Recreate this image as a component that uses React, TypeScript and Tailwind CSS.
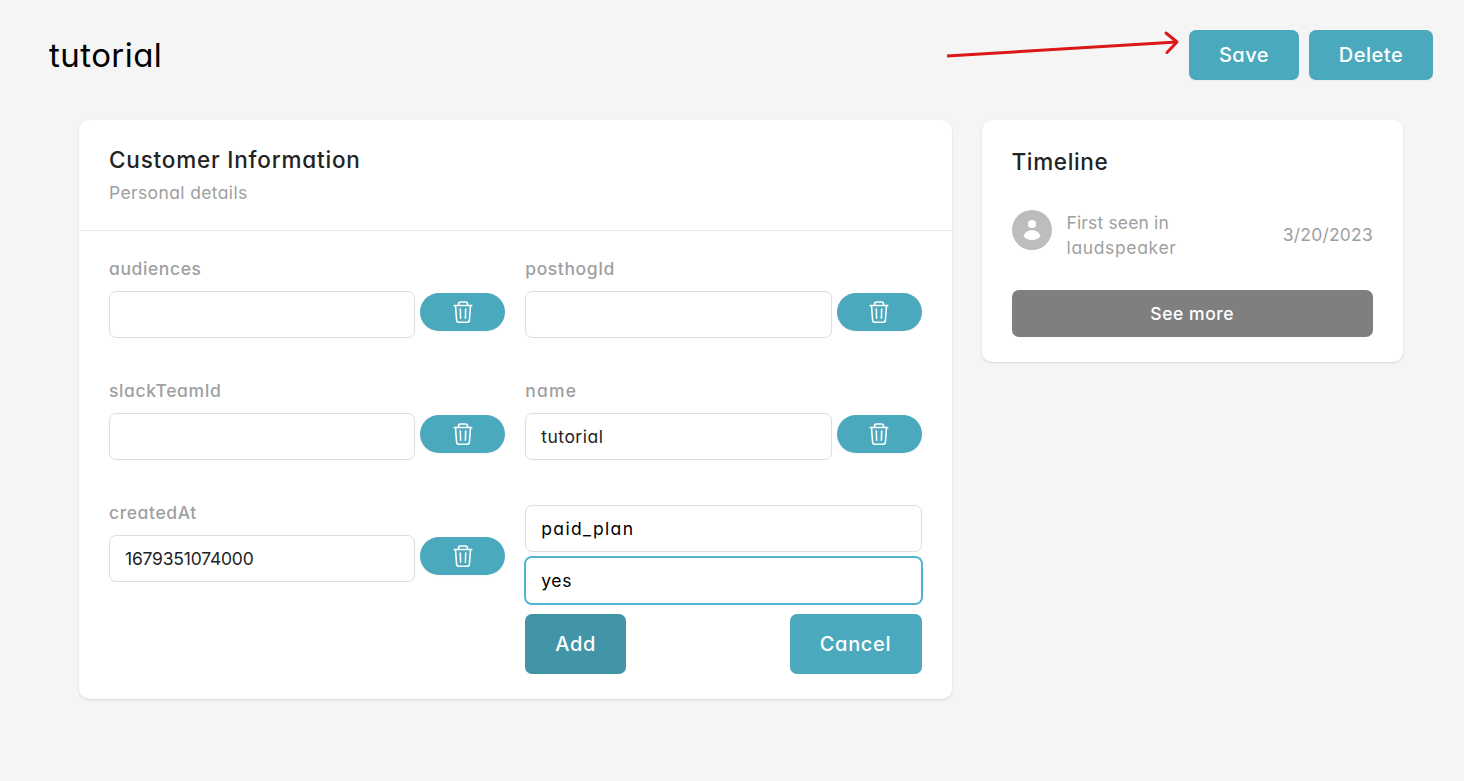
import React from "react";

function TrashIcon() {
  return (
    <svg width="20" height="24" viewBox="0 0 20 24" fill="none" stroke="white" strokeWidth="1.6" strokeLinecap="round" strokeLinejoin="round">
      <path d="M1.2 5.5H18.800" />
      <path d="M5.5 5.2V4C5.5 2.6 6.3 2 7.6 2H12.4C13.700 2 14.5 2.600 14.5 4V5.2" />
      <path d="M2.500 5.700L3.600 20.300C3.700 21.600 4.500 22.200 5.600 22.200H14.400C15.500 22.200 16.300 21.600 16.400 20.300L17.500 5.700" />
      <path d="M7.300 9L7.600 18.200M12.700 9L12.400 18.200" />
    </svg>
  );
}

const inputBase = "flex h-[47px] items-center rounded-[7px] border bg-white px-[15px] pt-px text-[17.5px]";

interface FieldProps {
  label: string;
  value?: string;
  labelTracking?: string;
  valueTracking?: string;
}

function Field({ label, value, labelTracking = "tracking-[0.6px]", valueTracking = "tracking-[0.5px]" }: FieldProps) {
  return (
    <div className="h-[92px]">
      <div className={`h-[35px] pt-px text-[17.5px] leading-[23px] font-medium text-[#9f9f9f] ${labelTracking}`}>
        {label}
      </div>
      <div className="flex gap-[5px]">
        <div className={`${inputBase} ${valueTracking} min-w-0 flex-1 border-[#dedede] text-[#222325]`}>{value}</div>
        <button className="mt-[2px] flex h-[38px] w-[85px] items-center justify-center rounded-full bg-[#4ba9be] shadow-xs" aria-label="Remove attribute">
          <TrashIcon />
        </button>
      </div>
    </div>
  );
}

export default function App() {
  return (
    <main className="h-[781px] w-[1464px] overflow-hidden bg-[#f5f5f5] font-['Inter',sans-serif] [font-feature-settings:'cv11']">
      <header className="flex h-[120px] items-start pt-[30px] pr-[31px] pl-[49px]">
        <h1 className="text-[33px] leading-[50px] tracking-[0.45px] text-black">tutorial</h1>
        <svg className="mr-[9px] ml-auto" width="236" height="50" viewBox="0 0 236 50" fill="none" stroke="#dc1717" strokeWidth="3" strokeLinecap="round" strokeLinejoin="round">
          <path d="M3 26L233 12" strokeLinecap="butt" />
          <path d="M222 3L233 12L223 22.500" />
        </svg>
        <div className="flex gap-[10px] text-[20px] font-medium tracking-[0.5px] text-white">
          <button className="h-[50px] w-[110px] rounded-[7px] bg-[#4ba9be] shadow-xs">Save</button>
          <button className="h-[50px] w-[124px] rounded-[7px] bg-[#4ba9be] shadow-xs">Delete</button>
        </div>
      </header>
      <div className="flex items-start gap-[30px] pl-[79px]">
        <section className="h-[579px] w-[872.5px] rounded-[10px] bg-white shadow">
          <div className="h-[111px] border-b border-[#ebebeb] px-[30px] pt-[25px]">
            <h2 className="text-[22.5px] leading-[30px] font-medium tracking-[0.8px] text-[#222325]">Customer Information</h2>
            <p className="mt-[6px] text-[17.5px] leading-6 tracking-[0.37px] text-[#9f9f9f]">Personal details</p>
          </div>
          <div className="grid grid-cols-2 gap-x-5 gap-y-[30px] px-[30px] pt-[25px]">
            <Field label="audiences" />
            <Field label="posthogId" />
            <Field label="slackTeamId" />
            <Field label="name" value="tutorial" labelTracking="tracking-[1.2px]" />
            <Field label="createdAt" value="1679351074000" valueTracking="tracking-[-0.2px]" />
            <div className="pt-[5px]">
              <div className={`${inputBase} border-[#dedede] tracking-[1.35px] text-black`}>paid_plan</div>
              <div className={`${inputBase} mt-[5px] border-[#4fb4cd] tracking-[0.6px] text-black ring-1 ring-[#4fb4cd]`}>yes</div>
              <div className="mt-[10px] flex justify-between text-[20px] font-medium tracking-[0.7px] text-white">
                <button className="h-[60px] w-[101px] rounded-[7px] bg-[#4295a6]">Add</button>
                <button className="h-[60px] w-[132px] rounded-[7px] bg-[#4ba9be]">Cancel</button>
              </div>
            </div>
          </div>
        </section>
        <section className="h-[242px] w-[421.5px] rounded-[10px] bg-white px-[30px] pt-[27px] shadow">
          <h2 className="text-[22.5px] leading-[30px] font-medium tracking-[0.65px] text-[#222325]">Timeline</h2>
          <div className="mt-[33px] flex h-[50px]">
            <div className="flex size-10 shrink-0 items-center justify-center rounded-full bg-[#bdbdbd]">
              <svg width="20" height="22" viewBox="0 0 20 22" fill="white">
                <circle cx="10" cy="5" r="4" />
                <path d="M1.500 17.500C2.500 13.500 5.800 11.300 10 11.300S17.500 13.500 18.500 17.500C16.500 20 13.500 21 10 21S3.500 20 1.500 17.500Z" />
              </svg>
            </div>
            <p className="ml-[15px] w-[130px] text-[17.5px] leading-[25px] text-[#9f9f9f]">
              <span className="tracking-[0.15px]">First seen in </span>
              <span className="tracking-[0.65px]">laudspeaker</span>
            </p>
            <time className="ml-auto text-[17.5px] leading-[50px] tracking-[0.2px] text-[#9f9f9f]">3/20/2023</time>
          </div>
          <button className="mt-[30px] h-[47px] w-full rounded-[7px] bg-[#7f7f7f] pt-px text-[17.5px] font-medium tracking-[0.55px] text-white">See more</button>
        </section>
      </div>
    </main>
  );
}
